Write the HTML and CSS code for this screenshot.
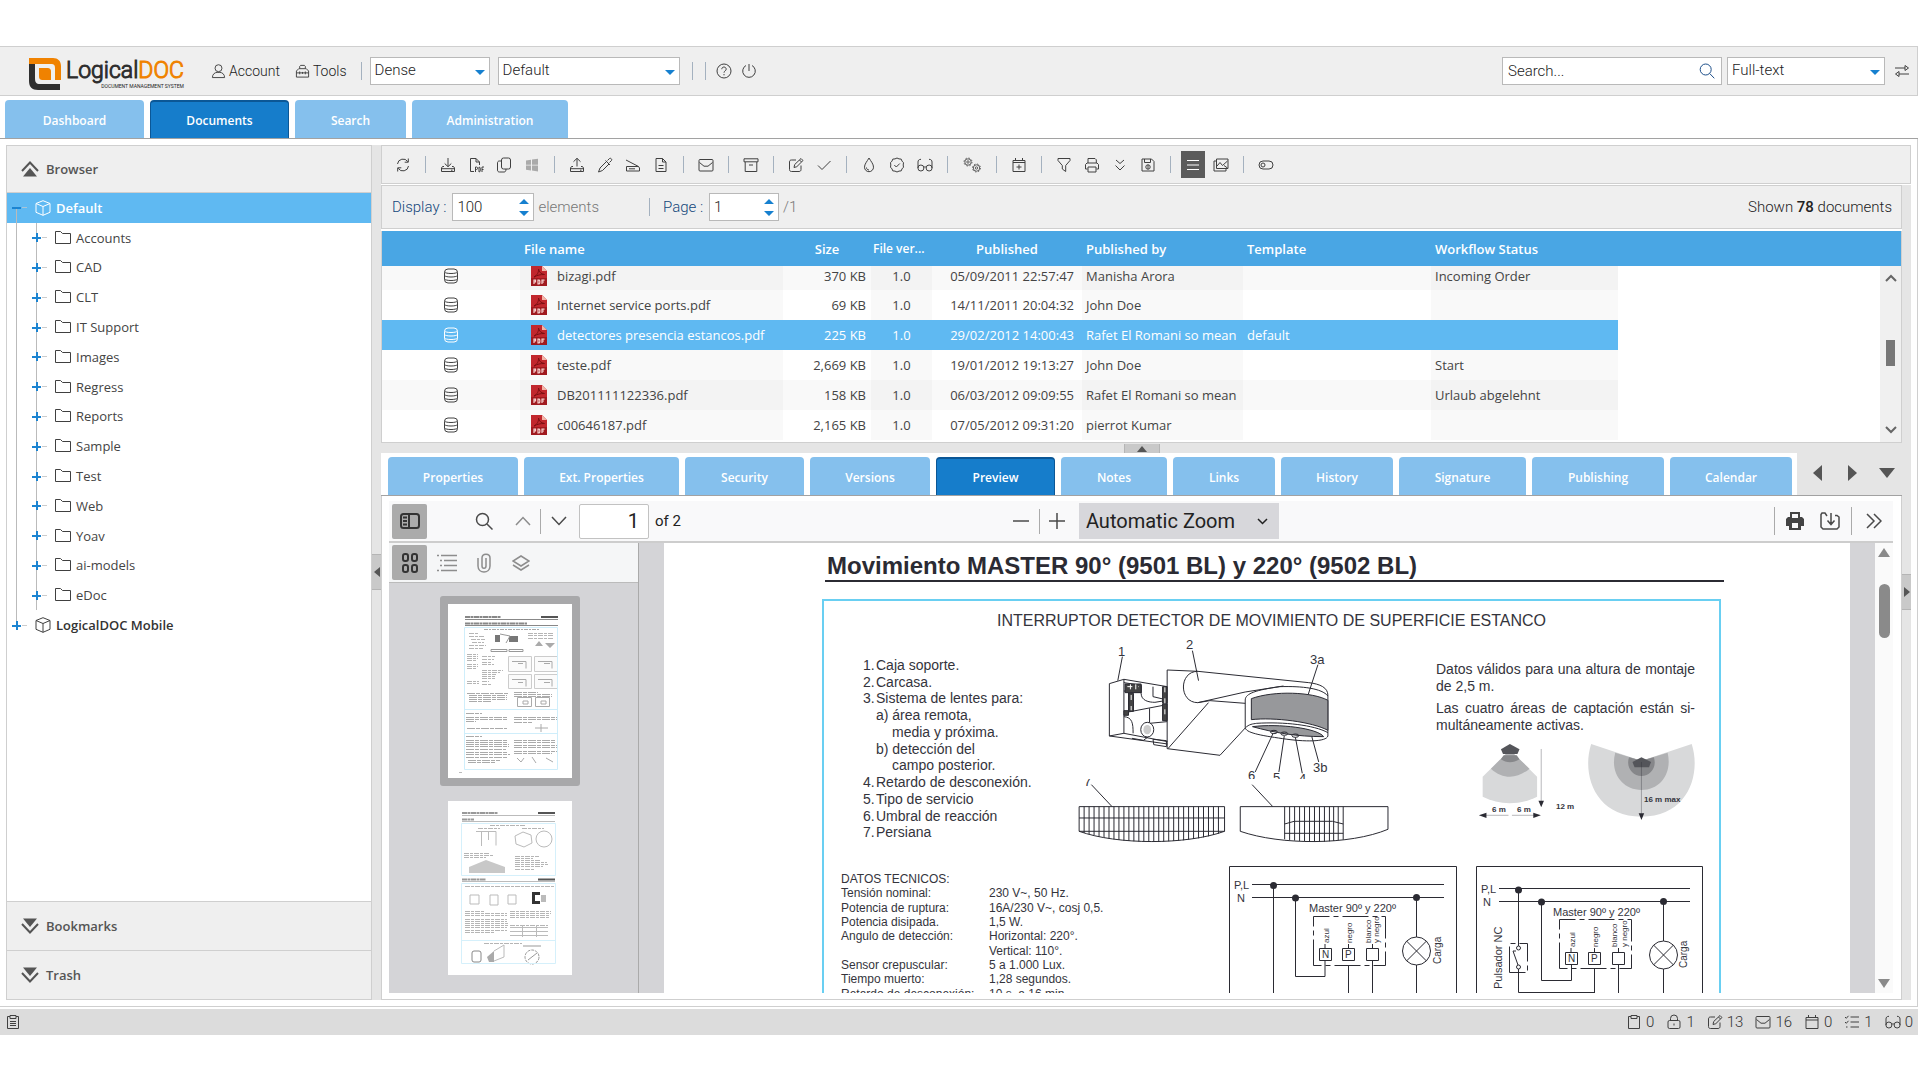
FILE: index.html
```html
<!DOCTYPE html>
<html lang="en">
<head>
<meta charset="utf-8">
<title>LogicalDOC</title>
<link rel="stylesheet" href="styles.css">
</head>
<body>
<svg class="sprite" aria-hidden="true">
  <symbol id="i-user" viewBox="0 0 16 16"><circle cx="8" cy="5" r="3.7"/><path d="M1.500 15c0-3.500 2.500-5.500 5-5.500h3c2.500 0 5 2 5 5.500z"/></symbol>
  <symbol id="i-tools" viewBox="0 0 16 16"><path d="M5 5V3l1-1h4l1 1v2M1.500 14.500V8L4 5.500h8L14.500 8v6.500zM1.500 10h13M5 8.500v3M11 8.500v3M8 9v2"/></symbol>
  <symbol id="i-help" viewBox="0 0 16 16"><circle cx="8" cy="8" r="7"/><path d="M5.800 6.200c0-3 4.400-2.800 4.400 0C10.200 7.900 8 7.800 8 9.700M8 11v1.300"/></symbol>
  <symbol id="i-power" viewBox="0 0 16 16"><path d="M8 1v7M5 2.500a6.300 6.300 0 1 0 6 0"/></symbol>
  <symbol id="i-search" viewBox="0 0 16 16"><circle cx="6.700" cy="6.500" r="5.500"/><path d="M10.700 10.500L15.300 15.300"/></symbol>
  <symbol id="i-swap" viewBox="0 0 16 16"><path d="M1 5h10M15 11H5M11 2.500l3.500 2.500L11 7.500zM5 8.500L1.500 11 5 13.500z"/></symbol>
  <symbol id="i-refresh" viewBox="0 0 16 16"><path d="M2.500 7a5.600 5.600 0 0 1 10.300-2.300M13.500 9a5.600 5.600 0 0 1-10.300 2.300M13.300 1.500v3.700H9.700M2.700 14.500v-3.700h3.600"/></symbol>
  <symbol id="i-download" viewBox="0 0 16 16"><path d="M8 1v8.500M4.700 6.500L8 9.700l3.300-3.200M4 9.500H2.500L1.500 11v3.500h13V11l-1-1.500H12M1.500 11.700h13M11 13.200h1.500"/></symbol>
  <symbol id="i-upload" viewBox="0 0 16 16"><path d="M8 9.500V1.500M4.500 4.700L8 1.300l3.500 3.400M4 9.500H2.500L1.500 11v3.500h13V11l-1-1.500H12M1.500 11.700h13M11 13.200h1.500"/></symbol>
  <symbol id="i-pdf" viewBox="0 0 16 16"><path d="M6 14.500H2.500v-13h5.500l3.500 3.500v3M8 1.500V5h3.500M7.500 15v-5h1c1.500 0 1.500 2.500 0 2.500h-1M11 15v-5c2 0 2 5 0 5M14 15v-5h2M14 12.500h1.500"/></symbol>
  <symbol id="i-copy" viewBox="0 0 16 16"><rect x="5.500" y="1" width="9" height="11" rx="2"/><path d="M5.500 4H3.300C2 4 1.500 5 1.500 6v7c0 1.300.700 2 2 2h4.500c1.500 0 2-1 2-3"/></symbol>
  <symbol id="i-win" viewBox="0 0 16 16"><path class="solid" d="M2 3.500l5-.8v5H2zM8 2.600l6-.9v6H8zM2 8.500h5v5l-5-.8zM8 8.500h6v6l-6-.9z"/></symbol>
  <symbol id="i-pen" viewBox="0 0 16 16"><path d="M10.500 3.500l2-2c1-1 3 1 2 2l-2 2M8.500 3.500l4.500 4.500M9.500 4.500L3 11l-1.500 4 4-1.500L12 7"/></symbol>
  <symbol id="i-scan" viewBox="0 0 16 16"><path d="M1 3l12.500 6.500M1.500 9.500h12l1 1.500v3h-13zM4 11.800h6"/></symbol>
  <symbol id="i-doc" viewBox="0 0 16 16"><path d="M3 1.500h6.500L13 5v9.500H3zM9.500 1.500V5H13M5.500 8.500h5M5.500 11.500h5"/></symbol>
  <symbol id="i-mail" viewBox="0 0 16 16"><rect x="1" y="2.500" width="14" height="11.500" rx="1"/><path d="M1.500 5.500L6 9.200h4l4.500-3.700"/></symbol>
  <symbol id="i-archive" viewBox="0 0 16 16"><path d="M1 1.800h14v3H1zM2.200 5v9.500h11.600V5M6 8h4"/></symbol>
  <symbol id="i-edit" viewBox="0 0 16 16"><path d="M8 3H3.500c-1.300 0-2 .7-2 2v7.500c0 1.300.7 2 2 2H11c1.300 0 2-.7 2-2V8.500M6 10.500l.700-3 6.300-6 2 2-6.200 6.200zM11.500 3l2 2"/></symbol>
  <symbol id="i-check" viewBox="0 0 16 16"><path d="M2 8.500l4 4L14.500 4"/></symbol>
  <symbol id="i-drop" viewBox="0 0 16 16"><path d="M8 1c2 3.500 4.500 6 4.500 9.200a4.500 4.500 0 0 1-9 0C3.500 7 6 4.500 8 1zM8 13c-1.500 0-2.500-1-2.500-2.500"/></symbol>
  <symbol id="i-seal" viewBox="0 0 16 16"><path d="M8 1l2 .9 2.200.2.800 2 1.500 1.600L14.200 8l.3 2.200-1.500 1.700-.8 2-2.200.2L8 15l-2-.9-2.200-.2-.8-2-1.500-1.700L1.800 8l-.3-2.300L3 4.100l.8-2L6 1.900zM5.300 8l2 2 3.500-3.500"/></symbol>
  <symbol id="i-glass" viewBox="0 0 16 16"><circle cx="3.900" cy="11" r="3"/><circle cx="12.100" cy="11" r="3"/><path d="M6.800 10.300c.8-.6 1.600-.6 2.400 0M1 11V5c0-1.500.8-2.700 3-2.700M15 11V5c0-1.500-.8-2.700-3-2.700"/></symbol>
  <symbol id="i-gears" viewBox="0 0 20 16"><g stroke-width=".8"><circle cx="6" cy="5" r="4" stroke-dasharray="1.500 1.640"/><circle cx="6" cy="5" r="3.200"/><circle cx="6" cy="5" r="1.200"/><circle cx="14.500" cy="11" r="4" stroke-dasharray="1.500 1.640"/><circle cx="14.500" cy="11" r="3.200"/><circle cx="14.500" cy="11" r="1.200"/></g></symbol>
  <symbol id="i-caladd" viewBox="0 0 16 16"><path d="M2 3.500h12v11H2zM2 5.500h12M4.500 1v2.500M11.500 1v2.500M8 7.500v5M5.500 10h5"/></symbol>
  <symbol id="i-filter" viewBox="0 0 16 16"><path d="M2 1.500h12v2L9.700 8.500v6L6.300 12V8.500L2 3.500z"/></symbol>
  <symbol id="i-print" viewBox="0 0 16 16"><path d="M4 6V1.500h7l1.300 1.300V6M3.500 12H1.500V7.500L3 6h10l1.500 1.500V12h-2M4 10h8v5H4z"/></symbol>
  <symbol id="i-dbl" viewBox="0 0 16 16"><path d="M4 3l4 3.500L12 3M3.500 8.500l4.500 4.500L12.500 8.500"/></symbol>
  <symbol id="i-save" viewBox="0 0 16 16"><path d="M2 2h9.500L14 4.500V14H2zM4.500 2v3.500h6V2M8 7.800v4.400M5.800 10a2.200 2.200 0 1 0 4.400 0 2.200 2.200 0 1 0-4.400 0"/></symbol>
  <symbol id="i-list" viewBox="0 0 16 16"><path d="M2 3.500h12M2 8h12M2 12.500h12"/></symbol>
  <symbol id="i-pics" viewBox="0 0 16 16"><path d="M3.500 2h11.500v9.500H3.500zM3.500 4H1v10h12v-2.500M4 9l3-3.500 2.500 3L14.500 4M11 8.500l3.500 2.500"/></symbol>
  <symbol id="i-toggle" viewBox="0 0 16 16"><rect x="1" y="4" width="14" height="8" rx="4"/><circle cx="5" cy="8" r="2"/></symbol>
  <symbol id="i-clip" viewBox="0 0 16 16"><path d="M5 2.500H2.500v12h11v-12H11M5 1.500h6v3H5z"/></symbol>
  <symbol id="i-clipfill" viewBox="0 0 16 16"><path d="M5 2.500H2.500v12h11v-12H11M5 1.500h6v3H5zM5 7.500h6M5 9.500h6M5 11.500h6"/></symbol>
  <symbol id="i-lock" viewBox="0 0 16 16"><rect x="2" y="6.500" width="12" height="8" rx="1.500"/><path d="M4.500 6.500V4.500a3.500 3.500 0 0 1 7 0v2M8 9.500v2"/></symbol>
  <symbol id="i-cal" viewBox="0 0 16 16"><path d="M2 3.500h12v11H2zM2 6h12M4.500 1v2.500M11.500 1v2.500"/></symbol>
  <symbol id="i-tasks" viewBox="0 0 16 16"><path d="M6.500 3H15M6.500 8H15M6.500 13H15M1 3l1.300 1.300L4.500 1.800M1 8l1.300 1.300L4.500 6.800M2 13h1.500"/></symbol>
  <symbol id="i-folder" viewBox="0 0 16 16"><path d="M.500 13.500v-12h5l2 2h8v10z"/></symbol>
  <symbol id="i-cube" viewBox="0 0 16 16"><path d="M8 .700l7 2.800v8.800L8 15.300 1 12.300V3.500zM1 3.500l7 3 7-3M8 6.500v8.800"/></symbol>
  <symbol id="i-db" viewBox="0 0 16 16"><rect x="1.500" y="1" width="13" height="14" rx="3.500"/><path d="M1.500 4c1 2 12 2 13 0M1.500 7.500c1 2 12 2 13 0M1.500 11c1 2 12 2 13 0"/></symbol>
  <symbol id="i-file" viewBox="0 0 16 20"><path fill="#c1272d" stroke="none" d="M0 0h11l5 5v15H0z"/><path fill="#a01a1f" stroke="none" d="M0 12h16v8H0z"/><path fill="#f3b5a8" stroke="none" d="M11 0l5 5h-5z"/><path stroke="#7c0f12" d="M3 11c3-1.500 5-5 4.500-8 .5 3 2.500 5 6 5.500-4 0-7 .5-10.500 2.500"/><path stroke="#f6d0cf" stroke-width="1.200" d="M3 18v-4h1.500v2H3M7 14.200v3.600h1.200l.6-.8v-2l-.600-.8zM11 18v-3.800h2.500M11 16h2"/></symbol>
</svg>

<div class="app">
  <header class="topbar">
    <div class="logo">
      <svg width="32" height="32" viewBox="0 0 32 32"><path fill="#2f2f2f" d="M0 6h6v14c0 4 1 6 5 6h20v6H9c-6 0-9-3-9-9z"/><path fill="#f08200" d="M0 0h24c5 0 8 3 8 8v14h-6V10c0-3-1-4-4-4H0z"/><path fill="#f08200" d="M10 10h8c3 0 4 1 4 4v8h-8c-3 0-4-1-4-4z"/></svg>
      <div class="logo-text"><span class="logo-name">Logical<b>DOC</b></span><span class="logo-sub">DOCUMENT MANAGEMENT SYSTEM</span></div>
    </div>
    <button class="menu-btn account"><svg class="ic"><use href="#i-user"/></svg>Account</button>
    <button class="menu-btn"><svg class="ic"><use href="#i-tools"/></svg>Tools</button>
    <span class="vsep"></span>
    <span class="combo w120"><select aria-label="Density"><option>Dense</option></select></span>
    <span class="combo w182"><select aria-label="Skin"><option>Default</option></select></span>
    <span class="vsep"></span><span class="vsep second"></span>
    <button class="icon-btn" aria-label="Help"><svg class="ic"><use href="#i-help"/></svg></button>
    <button class="icon-btn" aria-label="Log out"><svg class="ic"><use href="#i-power"/></svg></button>
    <span class="searchbox"><input type="text" value="Search..." aria-label="Search"><svg class="ic blue"><use href="#i-search"/></svg></span>
    <span class="combo w158"><select aria-label="Search type"><option>Full-text</option></select></span>
    <button class="icon-btn swap" aria-label="Switch"><svg class="ic"><use href="#i-swap"/></svg></button>
  </header>

  <nav class="tabs main-tabs">
    <button class="tab t-a">Dashboard</button><button class="tab t-a on">Documents</button><button class="tab t-b">Search</button><button class="tab t-c">Administration</button>
  </nav>

  <main class="workspace">
    <aside class="browser">
      <button class="section-head"><svg width="18" height="16" viewBox="0 0 18 16"><path fill="#555" d="M9 7l7 8.500H2z"/><path fill="none" stroke="#555" stroke-width="2" d="M1 10l8-8.500L17 10"/></svg>Browser</button>
      <ul class="tree">
        <li class="root sel"><i class="pm minus"></i><svg class="ic"><use href="#i-cube"/></svg>Default</li>
        <li><i class="pm"></i><svg class="ic"><use href="#i-folder"/></svg>Accounts</li>
        <li><i class="pm"></i><svg class="ic"><use href="#i-folder"/></svg>CAD</li>
        <li><i class="pm"></i><svg class="ic"><use href="#i-folder"/></svg>CLT</li>
        <li><i class="pm"></i><svg class="ic"><use href="#i-folder"/></svg>IT Support</li>
        <li><i class="pm"></i><svg class="ic"><use href="#i-folder"/></svg>Images</li>
        <li><i class="pm"></i><svg class="ic"><use href="#i-folder"/></svg>Regress</li>
        <li><i class="pm"></i><svg class="ic"><use href="#i-folder"/></svg>Reports</li>
        <li><i class="pm"></i><svg class="ic"><use href="#i-folder"/></svg>Sample</li>
        <li><i class="pm"></i><svg class="ic"><use href="#i-folder"/></svg>Test</li>
        <li><i class="pm"></i><svg class="ic"><use href="#i-folder"/></svg>Web</li>
        <li><i class="pm"></i><svg class="ic"><use href="#i-folder"/></svg>Yoav</li>
        <li><i class="pm"></i><svg class="ic"><use href="#i-folder"/></svg>ai-models</li>
        <li><i class="pm"></i><svg class="ic"><use href="#i-folder"/></svg>eDoc</li>
        <li class="root"><i class="pm"></i><svg class="ic"><use href="#i-cube"/></svg>LogicalDOC Mobile</li>
      </ul>
      <button class="section-head lower"><svg width="18" height="16" viewBox="0 0 18 16"><path fill="#555" d="M9 9L2 .5h14z"/><path fill="none" stroke="#555" stroke-width="2" d="M1 6l8 8.500L17 6"/></svg>Bookmarks</button>
      <button class="section-head lower"><svg width="18" height="16" viewBox="0 0 18 16"><path fill="#555" d="M9 9L2 .5h14z"/><path fill="none" stroke="#555" stroke-width="2" d="M1 6l8 8.500L17 6"/></svg>Trash</button>
    </aside>
    <div class="split-v"><span class="grip left"><svg width="6" height="10" viewBox="0 0 6 10"><path d="M6 0v10L0 5z"/></svg></span></div>

    <section class="content">
      <div class="toolbar">
        <button aria-label="Refresh"><svg class="ic"><use href="#i-refresh"/></svg></button><i class="sep"></i>
        <button aria-label="Download"><svg class="ic"><use href="#i-download"/></svg></button>
        <button aria-label="Export PDF"><svg class="ic"><use href="#i-pdf"/></svg></button>
        <button aria-label="Copy"><svg class="ic"><use href="#i-copy"/></svg></button>
        <button aria-label="Office" class="dim"><svg class="ic"><use href="#i-win"/></svg></button><i class="sep"></i>
        <button aria-label="Upload"><svg class="ic"><use href="#i-upload"/></svg></button>
        <button aria-label="Drop spot"><svg class="ic"><use href="#i-pen"/></svg></button>
        <button aria-label="Scan"><svg class="ic"><use href="#i-scan"/></svg></button>
        <button aria-label="Form"><svg class="ic"><use href="#i-doc"/></svg></button><i class="sep"></i>
        <button aria-label="Subscribe"><svg class="ic"><use href="#i-mail"/></svg></button><i class="sep"></i>
        <button aria-label="Archive"><svg class="ic"><use href="#i-archive"/></svg></button><i class="sep"></i>
        <button aria-label="Edit"><svg class="ic"><use href="#i-edit"/></svg></button>
        <button aria-label="Check in"><svg class="ic"><use href="#i-check"/></svg></button><i class="sep"></i>
        <button aria-label="Stamp"><svg class="ic"><use href="#i-drop"/></svg></button>
        <button aria-label="Sign"><svg class="ic"><use href="#i-seal"/></svg></button>
        <button aria-label="Reading"><svg class="ic"><use href="#i-glass"/></svg></button><i class="sep"></i>
        <button aria-label="Automation" class="wide"><svg class="ic w20"><use href="#i-gears"/></svg></button><i class="sep"></i>
        <button aria-label="Add event"><svg class="ic"><use href="#i-caladd"/></svg></button><i class="sep"></i>
        <button aria-label="Filter"><svg class="ic"><use href="#i-filter"/></svg></button>
        <button aria-label="Print"><svg class="ic"><use href="#i-print"/></svg></button>
        <button aria-label="Expand"><svg class="ic"><use href="#i-dbl"/></svg></button>
        <button aria-label="Save layout"><svg class="ic"><use href="#i-save"/></svg></button><i class="sep"></i>
        <button aria-label="List" class="pressed"><svg class="ic"><use href="#i-list"/></svg></button>
        <button aria-label="Gallery"><svg class="ic"><use href="#i-pics"/></svg></button><i class="sep"></i>
        <button aria-label="Toggle preview"><svg class="ic"><use href="#i-toggle"/></svg></button>
      </div>

      <div class="lower-area">
        <div class="docs">
          <div class="pager">
            <label for="display">Display :</label>
            <span class="spin w82"><input id="display" type="text" value="100"><svg width="10" height="17" viewBox="0 0 10 17"><path d="M5 0l5 5H0zM5 17l5-5H0z"/></svg></span>
            <span class="muted">elements</span><i class="vsep"></i>
            <label for="page">Page :</label>
            <span class="spin w70"><input id="page" type="text" value="1"><svg width="10" height="17" viewBox="0 0 10 17"><path d="M5 0l5 5H0zM5 17l5-5H0z"/></svg></span>
            <span class="muted">/1</span>
            <span class="shown">Shown <b>78</b> documents</span>
          </div>
          <div class="grid">
            <table>
              <colgroup><col class="c0"><col class="c1"><col class="c2"><col class="c3"><col class="c4"><col class="c5"><col class="c6"><col class="c7"><col></colgroup>
              <thead><tr><th></th><th>File name</th><th class="c">Size</th><th class="tight">File ver...</th><th class="c">Published</th><th>Published by</th><th>Template</th><th>Workflow Status</th><th></th></tr></thead>
              <tbody>
                <tr class="alt first"><td class="c"><svg class="ic"><use href="#i-db"/></svg></td><td class="name"><svg class="file"><use href="#i-file"/></svg>bizagi.pdf</td><td class="r">370 KB</td><td class="c">1.0</td><td class="d">05/09/2011 22:57:47</td><td>Manisha Arora</td><td></td><td>Incoming Order</td><td></td></tr>
                <tr><td class="c"><svg class="ic"><use href="#i-db"/></svg></td><td class="name"><svg class="file"><use href="#i-file"/></svg>Internet service ports.pdf</td><td class="r">69 KB</td><td class="c">1.0</td><td class="d">14/11/2011 20:04:32</td><td>John Doe</td><td></td><td></td><td></td></tr>
                <tr class="picked"><td class="c"><svg class="ic"><use href="#i-db"/></svg></td><td class="name"><svg class="file"><use href="#i-file"/></svg>detectores presencia estancos.pdf</td><td class="r">225 KB</td><td class="c">1.0</td><td class="d">29/02/2012 14:00:43</td><td>Rafet El Romani so mean</td><td>default</td><td></td><td></td></tr>
                <tr><td class="c"><svg class="ic"><use href="#i-db"/></svg></td><td class="name"><svg class="file"><use href="#i-file"/></svg>teste.pdf</td><td class="r">2,669 KB</td><td class="c">1.0</td><td class="d">19/01/2012 19:13:27</td><td>John Doe</td><td></td><td>Start</td><td></td></tr>
                <tr class="alt"><td class="c"><svg class="ic"><use href="#i-db"/></svg></td><td class="name"><svg class="file"><use href="#i-file"/></svg>DB201111122336.pdf</td><td class="r">158 KB</td><td class="c">1.0</td><td class="d">06/03/2012 09:09:55</td><td>Rafet El Romani so mean</td><td></td><td>Urlaub abgelehnt</td><td></td></tr>
                <tr><td class="c"><svg class="ic"><use href="#i-db"/></svg></td><td class="name"><svg class="file"><use href="#i-file"/></svg>c00646187.pdf</td><td class="r">2,165 KB</td><td class="c">1.0</td><td class="d">07/05/2012 09:31:20</td><td>pierrot Kumar</td><td></td><td></td><td></td></tr>
              </tbody>
            </table>
            <div class="gscroll"><svg width="12" height="8" viewBox="0 0 12 8"><path d="M1 7l5-5 5 5"/></svg><span></span><svg width="12" height="8" viewBox="0 0 12 8"><path d="M1 1l5 5 5-5"/></svg></div>
          </div>
          <div class="split-h"><span class="grip"><svg width="10" height="6" viewBox="0 0 10 6"><path d="M0 6h10L5 0z"/></svg></span></div>

          <div class="tabrow">
            <nav class="tabs doc-tabs">
              <button class="tab">Properties</button><button class="tab">Ext. Properties</button><button class="tab">Security</button><button class="tab">Versions</button><button class="tab on">Preview</button><button class="tab">Notes</button><button class="tab">Links</button><button class="tab">History</button><button class="tab">Signature</button><button class="tab">Publishing</button><button class="tab">Calendar</button>
            </nav>
            <div class="tabnav"><svg width="9" height="16" viewBox="0 0 9 16"><path d="M9 0v16L0 8z"/></svg><svg width="9" height="16" viewBox="0 0 9 16"><path d="M0 0v16l9-8z"/></svg><svg width="16" height="10" viewBox="0 0 16 10"><path d="M0 0h16L8 10z"/></svg></div>
          </div>

          <div class="preview">
            <div class="pdfbar">
              <button class="pdf-btn down" aria-label="Toggle sidebar"><svg width="20" height="16" viewBox="0 0 20 16"><rect x="1" y="1" width="18" height="14" rx="2.500"/><path d="M9 1v14M3 4.500h4M3 8h4M3 11.500h4"/></svg></button>
              <button class="pdf-btn find" aria-label="Find"><svg width="18" height="18" viewBox="0 0 18 18"><circle cx="7.500" cy="7.500" r="6"/><path d="M12 12l5.500 5.500"/></svg></button>
              <button class="pdf-btn lite" aria-label="Previous page"><svg width="16" height="10" viewBox="0 0 16 10"><path d="M1 9l7-7.500L15 9"/></svg></button><i class="psep"></i>
              <button class="pdf-btn" aria-label="Next page"><svg width="16" height="10" viewBox="0 0 16 10"><path d="M1 1l7 7.500L15 1"/></svg></button>
              <input class="pagebox" type="text" value="1" aria-label="Page number"><span class="oftext">of 2</span>
              <button class="pdf-btn zoomout" aria-label="Zoom out"><svg width="16" height="16" viewBox="0 0 16 16"><path d="M0 8h16"/></svg></button><i class="psep"></i>
              <button class="pdf-btn" aria-label="Zoom in"><svg width="16" height="16" viewBox="0 0 16 16"><path d="M0 8h16M8 0v16"/></svg></button>
              <span class="zoombox"><select aria-label="Zoom"><option>Automatic Zoom</option></select><svg width="11" height="7" viewBox="0 0 11 7"><path d="M1 1l4.500 4.500L10 1"/></svg></span>
              <i class="psep tall push"></i>
              <button class="pdf-btn" aria-label="Print"><svg width="18" height="20" viewBox="0 0 18 20"><path class="solid" d="M4 1h10v5h2l2 2v7h-3v4H3v-4H0V8l2-2h2zM6 3v4h6V3zM6 12v5h6v-5z"/></svg></button>
              <button class="pdf-btn" aria-label="Save"><svg width="20" height="18" viewBox="0 0 20 18"><path d="M7 4L5 1H2L1 2.500V15l2 2h14l2-2V5l-2-1.500h-2M11 1v11M7.500 8.500L11 12.500l3.500-4"/></svg></button><i class="psep tall"></i>
              <button class="pdf-btn" aria-label="Tools"><svg width="16" height="16" viewBox="0 0 16 16"><path d="M1 1l7 7-7 7M8 1l7 7-7 7"/></svg></button>
            </div>
            <div class="pdfbody">
              <div class="thumbs">
                <div class="thumbbar">
                  <button class="pdf-btn down" aria-label="Thumbnails"><svg width="16" height="20" viewBox="0 0 16 20"><rect x="1" y="1" width="5" height="7" rx="2"/><rect x="10" y="1" width="5" height="7" rx="2"/><rect x="1" y="12" width="5" height="7" rx="2"/><rect x="10" y="12" width="5" height="7" rx="2"/></svg></button>
                  <button class="pdf-btn lite" aria-label="Outline"><svg width="20" height="18" viewBox="0 0 20 18"><path d="M0 1.500h2M4 1.500h16M3 6.500h2M7 6.500h13M3 11.500h2M7 11.500h13M0 16.500h2M4 16.500h16"/></svg></button>
                  <button class="pdf-btn lite" aria-label="Attachments"><svg width="14" height="20" viewBox="0 0 14 20"><path d="M1 5v8c0 8 12 8 12 0V5c0-5-8-5-8 0v8c0 3 4 3 4 0V5"/></svg></button>
                  <button class="pdf-btn lite" aria-label="Layers"><svg width="18" height="16" viewBox="0 0 18 16"><path d="M9 1l8 5-8 5-8-5zM1 10l8 5 8-5"/></svg></button>
                </div>
                <div class="thumb current"><svg width="124" height="174" viewBox="0 0 124 174">
                  <g stroke="#888" fill="none"><path stroke-width="2" stroke-dasharray="5 .5 3 .5" d="M17 13h36M17 19.500h62"/><path stroke="#555" stroke-width="2" d="M93 13h17"/><path d="M17 15.500h93M17 21.500h93"/>
                  <path stroke="#aaa" stroke-dasharray="4 1 2 1" d="M36 25.500h56"/>
                  <path stroke="#b5b5b5" stroke-dasharray="5 1 3 1" d="M21 29.500h10M21 32.500h16M23 35.500h14M24 38.500h12M21 41.500h17M21 44.500h14M80 29.500h26M80 31.500h26M80 34.500h26M19 50.500h11M19 52.500h11M34 52.500h13M19 54.500h11M34 55.500h12M19 56.500h10M34 58.500h10M19 60.500h11M34 60.500h12M19 62.500h11M19 64.500h10M34 66.500h21M34 68.500h18M34 70.500h14M34 72.500h13M34 74.500h13M19 77.500h12M34 77.500h7M19 79.500h12M34 80.500h10"/></g>
                  <path fill="#777" d="M47 31h5v7h-5zM61 32h9v6h-9z"/><path fill="none" stroke="#999" d="M52 30l10 2-4 7M43 45.500h16v2H43zM61 45.500h14v2H61z"/><path fill="#aaa" d="M87 42l4-5 4 5zM97 39h10l-5 5z"/>
                  <path fill="#fbfbfb" stroke="#ccc" d="M60.500 52.500h23v15h-23zM86.500 52.500h23v15h-23zM60.500 70.500h23v14h-23zM86.500 70.500h23v14h-23z"/><path fill="none" stroke="#aaa" d="M64 57.500h14v7M90 57.500h14v7M64 75.500h14v7M90 75.500h14v7M70 59.500h5M96 59.500h6M70 78.500h5M96 78.500h6"/>
                  <g stroke="#aaa" fill="none" stroke-dasharray="8 1 4 1"><path d="M19 89.500h42M21 91.500h38M21 93.500h38M21 95.500h38M21 97.500h22M66 88.500h24M66 90.500h38M66 92.500h38M18 109.500h16M18 113.500h42M18 115.500h42M18 117.500h10M66 113.500h43M66 115.500h43M19 124.500h40M66 118.500h18M18 132.500h16M18 136.500h42M18 138.500h42M18 140.500h43M18 142.500h43M18 145.500h40M18 148.500h42M18 150.500h44M18 153.500h42M20 156.500h32M20 158.500h28M66 136.500h42M66 138.500h42M66 141.500h43M66 143.500h43M66 147.500h43M66 149.500h38"/></g>
                  <path fill="none" stroke="#aaa" d="M69.500 93.500h14v9h-14zM87.500 93.500h14v9h-14zM75 97h5v3h-5zM93 97h5v3h-5zM87 124h13M93 120v8M69 154l4 4 3-4M84 153l4 6M98 154l7 4"/>
                  <path fill="none" stroke="#cfeefb" d="M16.500 23.500h93v142h-93zM16 105.500h94M16 129.500h94"/><path stroke="#bbb" d="M11 168.500h3"/>
                </svg></div>
                <div class="thumb"><svg width="124" height="174" viewBox="0 0 124 174">
                  <g stroke="#999" fill="none"><path stroke-width="2" stroke-dasharray="5 .5 3 .5" d="M14 12h36M14 18.500h12M14 78.500h24"/><path stroke="#555" stroke-width="2" d="M90 12h17M90 78.500h17"/><path stroke="#bbb" d="M14 14.500h93M14 20.500h93M14 80.500h93"/>
                  <path stroke="#b5b5b5" stroke-dasharray="5 1 3 1" d="M42 24.500h36M30 27.500h22M74 27.500h22M16 52.500h25M16 54.500h30M16 56.500h22M67 55.500h24M67 57.500h18M67 59.500h25M67 61.500h32M67 63.500h33M67 65.500h28M67 68.500h20M17 85.500h90M17 110.500h20M17 112.500h42M17 114.500h42M17 118.500h42M17 120.500h42M17 122.500h43M17 124.500h43M17 126.500h42M17 129.500h42M17 131.500h30M62 110.500h41M62 112.500h41M62 114.500h40M62 116.500h40M62 124.500h38M36 142.500h38"/></g>
                  <path fill="none" stroke="#bbb" d="M28 30.500h20v14M33.500 31v14M40.500 31v8M75 31l8 3 1 8-8 4-8-3-1-8zM22 94h9v9h-9zM42 94h8v10h-8zM60 94h8v9h-8zM62 126.500h38M62 130.500h38M62 134.500h38M74.500 124v12M88.500 124v12"/><circle cx="96" cy="38" r="8" fill="none" stroke="#bbb"/><path fill="#c8c8c8" d="M21 72v-6l17-7 19 7v6z"/><path fill="#333" d="M84 91h8v3h-5v6h5v3h-8z"/><path fill="#bbb" d="M93 94h5v7h-5z"/>
                  <rect x="24" y="150" width="9" height="11" rx="2" fill="none" stroke="#888"/><path fill="#aaa" d="M39 156l7-6v11h-5z"/><path fill="none" stroke="#bbb" d="M46 150l10-6v12l-10 4"/><circle cx="84" cy="156" r="7" fill="none" stroke="#999" stroke-dasharray="3 1"/><path fill="none" stroke="#999" d="M80 159l9-7M75 145h18"/>
                  <path fill="none" stroke="#d5f0fb" d="M13.500 22.500h94v52h-94zM13.500 82.500h94v80h-94zM13 139.500h94"/>
                </svg></div>
              </div>
              <div class="pageview">
                <article class="page">
                  <h1>Movimiento MASTER 90° (9501 BL) y 220° (9502 BL)</h1>
                  <div class="frame">
                    <h2>INTERRUPTOR DETECTOR DE MOVIMIENTO DE SUPERFICIE ESTANCO</h2>
                    <div class="row1">
                      <div class="parts">
                        <span>1.</span><p>Caja soporte.</p><span>2.</span><p>Carcasa.</p><span>3.</span><p>Sistema de lentes para:</p>
                        <span></span><p>a) área remota,</p><span></span><p class="in">media y próxima.</p><span></span><p>b) detección del</p><span></span><p class="in">campo posterior.</p>
                        <span>4.</span><p>Retardo de desconexión.</p><span>5.</span><p>Tipo de servicio</p><span>6.</span><p>Umbral de reacción</p><span>7.</span><p>Persiana</p>
                      </div>
                      <svg class="device" width="330" height="210" viewBox="270 100 330 210">
                        <g class="ln" transform="scale(.3827 .3333)">
                          <path d="M811 431v157l38-8V418zM849 418l113 22M811 588l152 24M849 580l114 25M849 428l45 8v22l-45-5M894 436v24c0 22 20 27 36 27l32-6M861 458v58l100-22M849 530c22 2 24 20 24 50M916 505v45l46-5M925 440v30l37 10M870 595l30 6 12-10M925 598l35 4v18l-33-6z"/>
                          <path fill="#333" d="M852 432h42v26h-42zM862 460h12v54h-12zM950 440h12v50h-12zM950 492h12v50h-12zM849 512h12v14h-12z"/>
                          <path stroke="#fff" d="M858 440h30M866 433v24M880 433v24M868 465v46M956 442v95" stroke-dasharray="5 6"/>
                          <ellipse cx="910" cy="569" rx="17" ry="22" fill="#fff"/><ellipse cx="910" cy="569" rx="10" ry="14" fill="#ccc" stroke="none"/>
                          <path d="M962 390v236l138 20 66-82M962 390l80 4 290 34c30 4 50 15 50 38v122c-4 18-60 18-118 8-60-10-98-18-98-34V480c0-20 30-30 90-40 60-2 110 5 126 28M1042 394c-50 0-50 94 0 94l124-32 100-18M1042 488l32-6 92 8M1070 488L964 626"/>
                          <path fill="#97989b" d="M1182 476c60-25 160-20 200 5v90c-40-25-140-40-200-32zM1185 560c70-10 170 5 186 30-70 0-130-12-186-30z"/>
                          <path d="M1166 564c10-12 20-12 30-14 70-5 150 5 186 28"/><ellipse cx="1241" cy="576" rx="9" ry="5"/><ellipse cx="1268" cy="581" rx="9" ry="5"/><ellipse cx="1297" cy="587" rx="9" ry="5"/>
                          <path d="M845 350l-12 72M1028 332l16 90M1356 374l-25 88M1238 582l-46 114M1268 588l-14 108M1297 592l18 108M1340 590l18 76M764 734l54 66M1184 734l54 66"/>
                          <path d="M732 800h380v74c-100 41-280 41-380 0zM732 834h380M732 874h380M745 800v79M758 800v83M771 800v86M784 800v90M797 800v93M810 800v96M823 800v98M836 800v100M849 800v102M862 800v103M875 800v104M888 800v105M901 800v105M914 800v106M927 800v106M940 800v106M953 800v105M966 800v104M979 800v103M992 800v102M1005 800v101M1018 800v99M1031 800v97M1044 800v95M1057 800v92M1070 800v89M1083 800v85M1096 800v81"/>
                          <path d="M1153 800h386v68c-100 48-280 48-386 6zM1269 800v98M1269 852l25-8h100l28 8M1269 880h153M1282 800v100M1295 800v102M1308 800v103M1321 800v104M1334 800v105M1347 800v105M1360 800v105M1373 800v105M1386 800v104M1397 800v103M1409 800v101M1422 800v99"/>
                        </g>
                        <g class="lb13"><text x="319" y="116">1</text><text x="387" y="109">2</text><text x="511" y="124">3a</text><text x="514" y="232">3b</text></g>
                        <svg x="270" y="100" width="330" height="139" viewBox="270 100 330 139"><g class="lb13"><text x="449" y="240">6</text><text x="474" y="242">5</text><text x="500" y="243">4</text></g></svg>
                        <svg x="270" y="239" width="40" height="10" viewBox="270 239 40 10"><text class="lb13" x="285" y="246">7</text></svg>
                      </svg>
                      <div class="notes">
                        <p class="just">Datos válidos para una altura de montaje</p><p>de 2,5 m.</p>
                        <p class="just gap">Las cuatro áreas de captación están si-</p><p>multáneamente activas.</p>
                        <svg width="259" height="86" viewBox="57 200 259 86">
                          <g transform="scale(.3444 .3333)">
                            <path fill="#d8d9da" d="M380 630l79 80v60c-50 26-110 26-158 0v-60z"/><path fill="#b0b1b3" d="M380 630l57 56c-36 32-78 32-112 0z"/><path fill="#86878a" d="M362 646h38l8 12c-18 12-38 12-54 0z"/><path fill="#54555a" d="M380 612l28 16-6 14h-42l-6-14z"/>
                            <path fill="#d8d9da" d="M762 662l146-50c28 90-10 218-146 218S588 702 616 612z"/><path fill="#b0b1b3" d="M762 662l76-24c14 60-20 112-76 112s-92-52-76-112z"/><path fill="#86878a" d="M762 662l36-10c10 30-10 56-36 56s-46-26-36-56z"/><path fill="#54555a" d="M762 652l28 14-6 16h-42l-6-16z"/>
                            <path class="ln" d="M471 627v160M300 826h76M386 826h76M762 666v160"/><path fill="#2b2b33" d="M463 782h16l-8 20zM754 820h16l-8 20zM290 826l22-8v16zM470 826l-22-8v16z"/>
                          </g>
                          <g class="lb8"><text x="113" y="272">6 m</text><text x="138" y="272">6 m</text><text x="177" y="269">12 m</text><text x="265" y="262">16 m max</text></g>
                        </svg>
                      </div>
                    </div>
                    <div class="row2">
                      <dl class="specs">
                        <dt>DATOS TECNICOS:</dt><dd></dd>
                        <dt>Tensión nominal:</dt><dd>230 V~, 50 Hz.</dd>
                        <dt>Potencia de ruptura:</dt><dd>16A/230 V~, cosj 0,5.</dd>
                        <dt>Potencia disipada.</dt><dd>1,5 W.</dd>
                        <dt>Angulo de detección:</dt><dd>Horizontal: 220°.</dd>
                        <dt></dt><dd>Vertical: 110°.</dd>
                        <dt>Sensor crepuscular:</dt><dd>5 a 1.000 Lux.</dd>
                        <dt>Tiempo muerto:</dt><dd>1,28 segundos.</dd>
                        <dt>Retardo de desconexión:</dt><dd>10 s. a 16 min.</dd>
                      </dl>
                      <svg class="wiring" width="475" height="140" viewBox="1230 866 475 140">
                        <g class="ln"><path d="M1230.500 1010V866.500h227V1010M1253 884.500h192M1253 897.500h192M1274.500 886v124M1296.500 898v78.500h29.500V961M1349.500 965v45M1373.500 961v49M1326 944v5M1349.500 944v5M1373.500 944v5M1417.500 898v39M1417.500 965v45M1407.500 941l20 20M1427.500 941l-20 20M1320.500 948.500h12v12h-12zM1343.500 948.500h12v12h-12zM1367.500 948.500h12v12h-12z"/><circle cx="1417.500" cy="951" r="14"/><path stroke-dasharray="26 4 5 4" d="M1314.500 965.500v-49h72v49z"/></g>
                        <g class="dots"><circle cx="1274.500" cy="885.500" r="3.500"/><circle cx="1296.500" cy="898" r="3.500"/><circle cx="1417.500" cy="897.500" r="3.500"/></g>
                        <g class="lb11"><text x="1235" y="889">P,L</text><text x="1238" y="902">N</text><text x="1310" y="912">Master 90º y 220º</text><text x="1323" y="958" class="s10">N</text><text x="1346" y="958" class="s10">P</text></g>
                        <g class="lb8v"><text transform="translate(1330 943) rotate(-90)">azul</text><text transform="translate(1353 943) rotate(-90)">negro</text><text transform="translate(1372 943) rotate(-90)">blanco</text><text transform="translate(1380 943) rotate(-90)">y negro</text><text class="s10" transform="translate(1442 964) rotate(-90)">Carga</text></g>
                        <g class="ln"><path d="M1477.500 1010V866.500h226V1010M1500 888.500h191M1500 901.500h191M1519.500 890v56M1519.500 969v23.500H1595M1517 951h-3l5 14M1542.500 902v78.500h30V965M1595.500 968v42M1619.500 965v45M1572 948v5M1595.500 948v5M1619.500 948v5M1664.500 902v39M1664.500 969v41M1654.500 945l20 20M1674.500 945l-20 20M1566.500 952.500h12v12h-12zM1589.500 952.500h12v12h-12zM1613.500 952.500h12v12h-12z"/><circle cx="1664.500" cy="955" r="14"/><circle cx="1519.500" cy="948" r="2"/><circle cx="1519.500" cy="967" r="2"/><path stroke-dasharray="26 4 5 4" d="M1560.500 968.500v-49h72v49zM1510.500 972.500v-29h18v29z"/></g>
                        <g class="dots"><circle cx="1519.500" cy="890" r="3.500"/><circle cx="1542.500" cy="902" r="3.500"/><circle cx="1664.500" cy="901.500" r="3.500"/></g>
                        <g class="lb11"><text x="1482" y="893">P,L</text><text x="1484" y="906">N</text><text x="1554" y="916">Master 90º y 220º</text><text x="1569" y="962" class="s10">N</text><text x="1592" y="962" class="s10">P</text></g>
                        <g class="lb8v"><text transform="translate(1576 947) rotate(-90)">azul</text><text transform="translate(1599 947) rotate(-90)">negro</text><text transform="translate(1618 947) rotate(-90)">blanco</text><text transform="translate(1628 947) rotate(-90)">y negro</text><text class="s10" transform="translate(1688 968) rotate(-90)">Carga</text><text class="s11" transform="translate(1503 989) rotate(-90)">Pulsador NC</text></g>
                      </svg>
                    </div>
                  </div>
                </article>
                <div class="pscroll"><svg width="12" height="9" viewBox="0 0 12 9"><path d="M6 0l6 9H0z"/></svg><span></span><svg width="12" height="9" viewBox="0 0 12 9"><path d="M6 9l6-9H0z"/></svg></div>
              </div>
            </div>
          </div>
        </div>
        <div class="split-v right"><span class="grip"><svg width="6" height="10" viewBox="0 0 6 10"><path d="M0 0v10l6-5z"/></svg></span></div>
      </div>
    </section>
  </main>

  <footer class="status">
    <button aria-label="Clipboard"><svg class="ic"><use href="#i-clipfill"/></svg></button>
    <div class="counts">
      <span><svg class="ic"><use href="#i-clip"/></svg>0</span><span><svg class="ic"><use href="#i-lock"/></svg>1</span><span><svg class="ic"><use href="#i-edit"/></svg>13</span><span><svg class="ic"><use href="#i-mail"/></svg>16</span><span><svg class="ic"><use href="#i-cal"/></svg>0</span><span><svg class="ic"><use href="#i-tasks"/></svg>1</span><span><svg class="ic"><use href="#i-glass"/></svg>0</span>
    </div>
  </footer>
</div>
</body>
</html>
```
FILE: styles.css
```css
* { box-sizing: border-box; }
body { margin: 0; background: #fff; color: #444; font: 13px "Open Sans", "Noto Sans", sans-serif; }
button, input, select { font: inherit; color: inherit; margin: 0; border: 0; padding: 0; background: none; border-radius: 0; }
h1, h2, p, dl, dd, ul { margin: 0; padding: 0; }
.sprite { position: absolute; width: 0; height: 0; }
.ic { width: 16px; height: 16px; flex: none; fill: none; stroke: #404040; stroke-width: 1; display: block; }
.ic.w20 { width: 20px; }
.ic.blue { stroke: #1d4f8a; }
.solid { fill: currentColor; stroke: none; fill-rule: evenodd; }

.app { height: 100vh; padding: 46px 2px 45px 0; display: flex; flex-direction: column; }

.topbar { height: 50px; flex: none; display: flex; align-items: center; background: #efefef; border: 1px solid #cfcfcf; border-left: 0; padding: 0 3px 0 29px; font: 300 15px Roboto, sans-serif; color: #222; }
.logo { display: flex; gap: 5px; width: 182px; align-items: center; padding-top: 6px; }
.logo-text { display: flex; flex-direction: column; }
.logo-name { font: 300 23px/24px Roboto, sans-serif; color: #222; -webkit-text-stroke: 1px #2f2f2f; }
.logo-name b { font-weight: 300; color: #f08200; -webkit-text-stroke: 1px #f08200; }
.logo-sub { font: 5px/6px Roboto, sans-serif; text-align: right; }
.menu-btn { display: flex; align-items: center; gap: 3px; margin-right: 15px; font-size: 14px; }
.menu-btn .ic { width: 15px; }
.vsep { width: 1px; height: 18px; background: #a4b1bf; margin: 0 8px 0 0; flex: none; }
.topbar .menu-btn + .vsep { margin-left: -1px; }
.combo { height: 28px; display: block; position: relative; margin-right: 8px; background: #fff; border: 1px solid #b9b9b9; }
.combo::after { content: ""; position: absolute; right: 4px; top: 12px; border: 5px solid transparent; border-top-color: #1680cf; border-bottom: 0; }
.combo select { appearance: none; width: 100%; height: 24px; padding-left: 4px; }
.w120 { width: 120px; } .w182 { width: 182px; } .w158 { width: 158px; }
.topbar .w182 { margin-right: 12px; }
.vsep.second { margin: 0 6px 0 4px; }
.icon-btn { width: 25px; display: flex; justify-content: center; }
.searchbox { margin-left: auto; width: 220px; height: 28px; display: flex; align-items: center; background: #fff; border: 1px solid #b9b9b9; padding: 0 6px 0 5px; margin-right: 5px; }
.searchbox input { flex: 1; min-width: 0; }
.topbar .w158 { margin-right: 4px; }

.tabs { display: flex; align-items: flex-end; border-bottom: 1px solid #a2a2a2; }
.tab { height: 38px; background: #85c0ed; color: #fff; font-size: 12px; font-weight: 600; border-radius: 4px 4px 0 0; padding-top: 2px; }
.tab.on { background: #167dcb; border: 1px solid #0b5796; border-bottom: 0; border-top-width: 2px; padding-top: 0; }
.main-tabs { flex: none; height: 43px; gap: 6px; padding-left: 5px; }
.t-a { width: 139px; } .t-b { width: 111px; } .t-c { width: 156px; }

.workspace { flex: 1; min-height: 0; display: flex; border: 1px solid #cfcfcf; border-width: 0 1px 1px 0; padding: 6px; }
.browser { width: 366px; flex: none; border: 1px solid #cfcfcf; display: flex; flex-direction: column; }
.section-head { height: 47px; flex: none; display: flex; align-items: center; gap: 7px; padding-left: 14px; background: #efefef; border-bottom: 1px solid #cfcfcf; font-weight: 600; font-size: 13px; color: #555; }
.section-head.lower { border-bottom: 0; border-top: 1px solid #cfcfcf; height: 49px; }
.tree { list-style: none; height: 447px; display: flex; flex-direction: column; margin-bottom: auto; position: relative; }
.tree li { flex: 1; min-height: 0; display: flex; align-items: center; padding-left: 21px; gap: 5px; position: relative; }
.tree li.root { padding-left: 1px; font-weight: 600; color: #333; }
.tree li.root.sel { background: #5fb9f2; color: #fff; }
.tree .sel .ic { stroke: #fff; }
.tree li::before { content: ""; position: absolute; left: 9px; top: 0; bottom: 0; width: 1px; background: #bbb; }
.tree li::after { content: ""; position: absolute; left: 29px; top: 0; bottom: 0; width: 1px; background: #bbb; }
.tree li.root::after { display: none; }
.tree li.sel::before { top: 50%; }
.tree li.root:last-child::before { bottom: 50%; }
.pm { width: 22px; height: 15px; flex: none; z-index: 1; background: linear-gradient(#1c84d1, #1c84d1) 4px 7px / 9px 2px no-repeat, linear-gradient(#1c84d1, #1c84d1) 8px 3px / 2px 9px no-repeat, linear-gradient(#ccc, #ccc) 14px 7px / 5px 1px no-repeat; }
.pm.minus { background: linear-gradient(#1c84d1, #1c84d1) 4px 7px / 9px 2px no-repeat, linear-gradient(#aac4d6, #aac4d6) 14px 7px / 5px 1px no-repeat; }

.split-v { width: 9px; flex: none; background: #e5e5e5; display: flex; align-items: center; }
.grip { background: #c9c9c9; border: 1px solid #b5b5b5; border-width: 1px 0; width: 9px; height: 36px; display: flex; align-items: center; justify-content: center; }
.grip svg { fill: #555; }
.content { flex: 1; min-width: 0; display: flex; flex-direction: column; }
.toolbar { height: 39px; flex: none; display: flex; align-items: center; background: #efefef; border: 1px solid #cfcfcf; padding-left: 7px; margin-bottom: 1px; }
.toolbar button { width: 28px; height: 28px; display: flex; justify-content: center; align-items: center; }
.toolbar button.wide { width: 32px; }
.toolbar .dim { color: #aaa; }
.toolbar .pressed { background: linear-gradient(#5b5b5b, #5b5b5b) center / 24px 27px no-repeat; }
.toolbar .pressed .ic { stroke: #fff; }
.sep { width: 1px; height: 17px; background: #a4b1bf; margin: 0 8px; }
.lower-area { flex: 1; min-height: 0; display: flex; }
.docs { flex: 1; min-width: 0; display: flex; flex-direction: column; }
.split-v .grip { margin-bottom: 2px; }

.pager { height: 44px; flex: none; display: flex; align-items: center; background: #efefef; border: 1px solid #cfcfcf; padding: 0 9px 0 10px; font: 300 15px Roboto, sans-serif; margin-bottom: 2px; color: #222; }
.pager label { color: #12467a; margin-right: 6px; }
.spin { height: 28px; display: flex; align-items: center; background: #fff; border: 1px solid #b9b9b9; padding: 0 4px; margin-right: 4px; }
.spin input { flex: 1; min-width: 0; }
.spin svg { fill: #1680cf; flex: none; }
.w82 { width: 82px; } .w70 { width: 70px; }
.muted { color: #777; }
.pager .vsep { margin: 0 13px 0 50px; }
.shown { margin-left: auto; }
.shown b { font-weight: 500; }

.grid { height: 212px; flex: none; position: relative; overflow: hidden; border: 1px solid #cfcfcf; border-top: 0; display: flex; align-items: flex-start; }
.grid table { width: 100%; border-collapse: collapse; table-layout: fixed; }
.c0 { width: 138px; } .c1 { width: 263px; } .c2 { width: 88px; } .c3 { width: 61px; } .c4 { width: 150px; } .c5 { width: 161px; } .c6 { width: 188px; } .c7 { width: 187px; }
th { height: 35px; background: #49a6e4; color: #fff; font-weight: 600; font-size: 13px; text-align: left; padding: 0 4px; white-space: nowrap; }
th.c, td.c { text-align: center; }
th.tight { padding: 0 2px; font-size: 12px; }
td { height: 30px; padding: 0 4px; line-height: 20px; white-space: nowrap; overflow: hidden; }
td .ic { margin: 0 auto; }
td.r { text-align: right; padding-right: 5px; }
td.d { text-align: right; padding-right: 8px; }
.first td { height: 24px; padding-bottom: 4px; }
td:nth-child(2n) { background: #f9f9f9; }
.alt td:nth-child(-n+8) { background: #f9f9f9; }
.alt td:nth-child(2n) { background: #f3f3f3; }
tr.picked td:nth-child(-n+8) { background: #5fb9f2; color: #fff; }
.picked .ic { stroke: #fff; }
.name .file { width: 16px; height: 20px; vertical-align: top; margin: 0 10px 0 7px; fill: none; }
.gscroll { position: absolute; right: 0; top: 35px; bottom: 0; width: 21px; background: #f0f0f0; display: flex; flex-direction: column; align-items: center; padding: 8px 0; }
.gscroll svg { fill: none; stroke: #666; stroke-width: 2; }
.gscroll span { width: 9px; height: 26px; background: #777; margin: 58px 0 auto; }
.split-h { height: 10px; flex: none; background: #e5e5e5; display: flex; justify-content: center; }
.split-h .grip { width: 36px; height: 9px; border-width: 0 1px; margin-top: 1px; }

.tabrow { height: 43px; flex: none; display: flex; background: #e5e5e5; border-bottom: 1px solid #a2a2a2; }
.doc-tabs { background: #fff; border: 0; padding: 0 5px 0 7px; gap: 6px; width: 1416px; }
.doc-tabs .tab { padding-left: 0; padding-right: 0; flex: 130 1 0; }
.doc-tabs .tab:nth-child(2) { flex-grow: 155; }
.doc-tabs .tab:nth-child(3) { flex-grow: 119; }
.doc-tabs .tab:nth-child(4) { flex-grow: 120; }
.doc-tabs .tab:nth-child(5) { flex-grow: 117; }
.doc-tabs .tab:nth-child(6) { flex-grow: 106; }
.doc-tabs .tab:nth-child(7) { flex-grow: 102; }
.doc-tabs .tab:nth-child(8) { flex-grow: 112; }
.doc-tabs .tab:nth-child(9) { flex-grow: 127; }
.doc-tabs .tab:nth-child(10) { flex-grow: 132; }
.doc-tabs .tab:nth-child(11) { flex-grow: 122; }
.tabnav { flex: 1; display: flex; align-items: center; gap: 26px; padding: 0 0 3px 16px; }
.tabnav svg { fill: #555; }
.tabnav svg:last-child { margin-left: -4px; }

.preview { flex: 1; min-height: 0; display: flex; flex-direction: column; padding: 5px 8px 6px 7px; border: 1px solid #cfcfcf; border-top: 0; }
.pdfbar { height: 42px; flex: none; display: flex; align-items: center; background: #f9f9fa; border-bottom: 2px solid #cdcdcd; padding: 0 2px 0 3px; font: 16px Roboto, sans-serif; color: #222; }
.pdf-btn { width: 35px; height: 35px; display: flex; align-items: center; justify-content: center; flex: none; color: #444; }
.pdf-btn svg { fill: none; stroke: #4a4a4a; stroke-width: 1.5; }
.pdf-btn.down { background: #ababab; border-radius: 2px; }
.pdf-btn.down svg { stroke-width: 2; stroke: #333; }
.pdf-btn.lite svg { stroke: #8d8d8d; }
.pdfbar .find { margin: 0 4px 0 39px; }
.psep { width: 1px; height: 25px; background: #aaa; flex: none; }
.psep.tall { height: 28px; margin: 0 3px; }
.pagebox { width: 70px; height: 35px; background: #fff; border: 1px solid #c2c2c2; text-align: right; padding-right: 9px; font-size: 20px; margin: 0 6px 0 3px; border-radius: 2px; }
.oftext { font-size: 15px; }
.zoomout { margin-left: 323px; }
.zoombox { width: 200px; height: 36px; background: #d7d7db; display: flex; align-items: center; margin-left: 4px; padding: 0 11px 0 7px; font-size: 20px; }
.zoombox select { appearance: none; flex: 1; min-width: 0; }
.zoombox svg { fill: none; stroke: #222; stroke-width: 1.5; }
.psep.push { margin: 0 2px 0 auto; }
.psep.push ~ .psep { margin: 0 4px; }
.pdfbody { flex: 1; min-height: 0; display: flex; }
.thumbs { width: 250px; flex: none; background: #d4d4d7; border-right: 1px solid #aaa; display: flex; flex-direction: column; align-items: center; overflow: hidden; padding-right: 8px; }
.thumbbar { height: 40px; flex: none; align-self: stretch; margin-right: -8px; display: flex; align-items: center; gap: 2px; background: #f5f6f7; border-bottom: 1px solid #bbb; padding-left: 3px; }
.thumb { border: 8px solid transparent; margin-bottom: 7px; border-radius: 3px; display: flex; }
.thumb svg { background: #fff; }
.thumb.current { border-color: #a8a8aa; margin-top: 13px; }
.pageview { flex: 1; min-width: 0; display: flex; background: #d4d4d7; padding-left: 25px; }
.page { flex: 1; min-width: 0; background: #fff; overflow: hidden; padding: 8px 126px 0 158px; color: #34343c; font-family: "Liberation Sans", Arial, sans-serif; }
.page h1 { font-size: 24px; line-height: 30px; margin: 0 0 17px 3px; padding-left: 2px; height: 31px; border-bottom: 2px solid #2b2b33; white-space: nowrap; color: #2b2b33; }
.frame { border: 2px solid #69cff2; border-bottom: 0; margin-right: 3px; }
.page h2 { font-size: 16px; font-weight: 400; text-align: center; line-height: 20px; padding: 10px 0 9px; white-space: nowrap; }
.row1 { height: 226px; display: grid; grid-template-columns: 206px 367px 259px; padding-left: 39px; font-size: 14px; }
.parts { height: 184px; margin-top: 17px; display: grid; grid-template: repeat(11, 1fr) / 13px 1fr; white-space: nowrap; }
.parts .in { padding-left: 16px; }
.device { overflow: visible; }
.notes { padding-top: 21px; line-height: 17px; }
.notes svg { display: block; margin-top: 6px; }
.just { text-align-last: justify; white-space: nowrap; }
.gap { margin-top: 5px; }
.row2 { display: grid; grid-template-columns: 388px 475px; padding-left: 17px; }
.specs { height: 129px; margin-top: 6px; display: grid; grid-template: repeat(9, 1fr) / 148px 1fr; font-size: 12px; white-space: nowrap; line-height: 14px; }
.ln, .ln path { fill: none; stroke: #2b2b33; stroke-width: 1; }
.ln path { vector-effect: non-scaling-stroke; }
.ln path[fill="#333"] { fill: #444; } .ln path[fill="#97989b"] { fill: #97989b; } .ln path[stroke="#fff"] { stroke: #fff; }
.ln ellipse { vector-effect: non-scaling-stroke; }
.dots { fill: #2b2b33; }
text { fill: #34343c; }
.lb13 { font-size: 13px; } .lb11 { font-size: 11px; } .lb8v { font-size: 8px; }
.s10 { font-size: 10px; } .s11 { font-size: 11px; }
.lb8 { font: bold 8px "Liberation Sans Narrow", "Liberation Sans", sans-serif; }
.pscroll { width: 43px; flex: none; border-left: 25px solid #d4d4d7; background: #fafafa; display: flex; flex-direction: column; align-items: center; padding: 5px 0; }
.pscroll svg { fill: #8a8a8a; }
.pscroll span { width: 11px; height: 54px; background: #8a8a8a; border-radius: 6px; margin: 27px 0 auto; }

.status { height: 26px; flex: none; margin-top: 2px; background: #dcdcdc; display: flex; align-items: center; justify-content: space-between; padding: 0 5px; font: 300 15px Roboto, sans-serif; color: #333; }
.counts { display: flex; gap: 12px; }
.counts span { display: flex; align-items: center; gap: 4px; }
```
